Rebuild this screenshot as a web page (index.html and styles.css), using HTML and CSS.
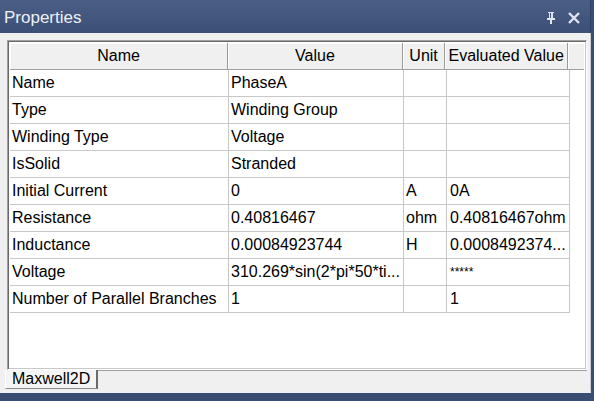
FILE: index.html
```html
<!DOCTYPE html>
<html>
<head>
<meta charset="utf-8">
<link rel="stylesheet" href="styles.css">
</head>
<body>
<div class="window">
  <div class="titlebar">
    <span class="title">Properties</span>
    <span class="buttons">
      <svg class="pin" width="14" height="14" viewBox="0 0 14 14"><path d="M4 1h6v1h-1v5h2v2H8v4H6V9H3V7h2V2H4z" fill="#dfe5ef"/><rect x="6" y="2" width="1" height="5" fill="#3d5179"/></svg>
      <svg class="close" width="14" height="14" viewBox="0 0 14 14"><path d="M2 2L12 12M12 2L2 12" stroke="#dfe5ef" stroke-width="2.4"/></svg>
    </span>
  </div>
  <div class="panel">
    <div class="frame">
      <div class="grid">
        <div class="row head">
          <div class="c c1">Name</div>
          <div class="c c2">Value</div>
          <div class="c c3">Unit</div>
          <div class="c c4">Evaluated Value</div>
          <div class="c c5"></div>
        </div>
        <div class="row"><div class="c c1">Name</div><div class="c c2">PhaseA</div><div class="c c3"></div><div class="c c4"></div></div>
        <div class="row"><div class="c c1">Type</div><div class="c c2">Winding Group</div><div class="c c3"></div><div class="c c4"></div></div>
        <div class="row"><div class="c c1">Winding Type</div><div class="c c2">Voltage</div><div class="c c3"></div><div class="c c4"></div></div>
        <div class="row"><div class="c c1">IsSolid</div><div class="c c2">Stranded</div><div class="c c3"></div><div class="c c4"></div></div>
        <div class="row"><div class="c c1">Initial Current</div><div class="c c2">0</div><div class="c c3">A</div><div class="c c4">0A</div></div>
        <div class="row"><div class="c c1">Resistance</div><div class="c c2">0.40816467</div><div class="c c3">ohm</div><div class="c c4">0.40816467ohm</div></div>
        <div class="row"><div class="c c1">Inductance</div><div class="c c2">0.00084923744</div><div class="c c3">H</div><div class="c c4">0.0008492374...</div></div>
        <div class="row"><div class="c c1">Voltage</div><div class="c c2">310.269*sin(2*pi*50*ti...</div><div class="c c3"></div><div class="c c4 stars">*****</div></div>
        <div class="row"><div class="c c1">Number of Parallel Branches</div><div class="c c2">1</div><div class="c c3"></div><div class="c c4">1</div></div>
      </div>
    </div>
    <div class="tabs">
      <div class="tab">Maxwell2D</div>
    </div>
  </div>
</div>
</body>
</html>
```
FILE: styles.css
```css
html, body {
  margin: 0;
  padding: 0;
}
body {
  width: 594px;
  height: 401px;
  background: #3a4d73;
  font-family: "Liberation Sans", Arial, sans-serif;
  overflow: hidden;
}
.window {
  width: 591px;
  height: 393px;
  display: flex;
  flex-direction: column;
}
.titlebar {
  height: 33px;
  flex: none;
  display: flex;
  align-items: center;
  justify-content: space-between;
  background: linear-gradient(#4a5e86, #3b4f77);
  border-right: 1px solid #2e3f62;
  box-sizing: border-box;
}
.title {
  color: #eef1f7;
  font-size: 17px;
  padding-left: 4px;
  padding-top: 2px;
}
.buttons {
  display: flex;
  gap: 9px;
  padding-right: 9px;
  padding-top: 2px;
}
.panel {
  flex: 1;
  background: #f0f0f0;
  display: flex;
  flex-direction: column;
  padding: 7px 3px 0 7px;
  border-right: 1px solid #c9cdd4;
  border-bottom: 3px solid #f0f0f0;
}
.frame {
  height: 330px;
  box-sizing: border-box;
  border-top: 1px solid #a0a0a0;
  border-left: 1px solid #a0a0a0;
  border-right: 1px solid #fff;
  border-bottom: 1px solid #fff;
  box-shadow: inset 1px 1px 0 #696969, inset -1px -1px 0 #c8c8c8;
  background: #fff;
  padding: 2px 2px 2px 2px;
}
.grid {
  display: flex;
  flex-direction: column;
}
.row {
  display: flex;
  height: 27px;
  font-size: 16px;
  color: #000;
}
.c {
  box-sizing: border-box;
  height: 27px;
  line-height: 26px;
  padding-left: 2px;
  border-right: 1px solid #c8c8c8;
  border-bottom: 1px solid #c8c8c8;
  white-space: nowrap;
  overflow: hidden;
}
.c1 { width: 219px; }
.c2 { width: 175px; }
.c3 { width: 43px; }
.c4 { width: 123px; padding-left: 3px; }
.c5 { width: 16px; }
.head .c {
  background: #f0f0f0;
  text-align: center;
  padding-left: 0;
  border-right: 1px solid #9a9a9a;
  border-bottom: 1px solid #a0a0a0;
  box-shadow: inset 1px 1px 0 #fff;
}
.head .c4 { text-align: left; padding-left: 3px; }
.head .c5 { border-right: none; }
.stars {
  font-size: 12px;
}
.tabs {
  height: 19px;
  margin-top: 0;
  margin-left: -2px;
  border-top: 1px solid #a0a0a0;
  display: flex;
}
.tab {
  margin-top: -1px;
  height: 19px;
  box-sizing: border-box;
  background: #f4f4f4;
  border-left: 1px solid #fff;
  border-right: 2px solid #6a6a6a;
  border-bottom: 1px solid #8a8a8a;
  padding: 0 6px 0 6px;
  font-size: 16px;
  line-height: 18px;
  color: #000;
}
```
